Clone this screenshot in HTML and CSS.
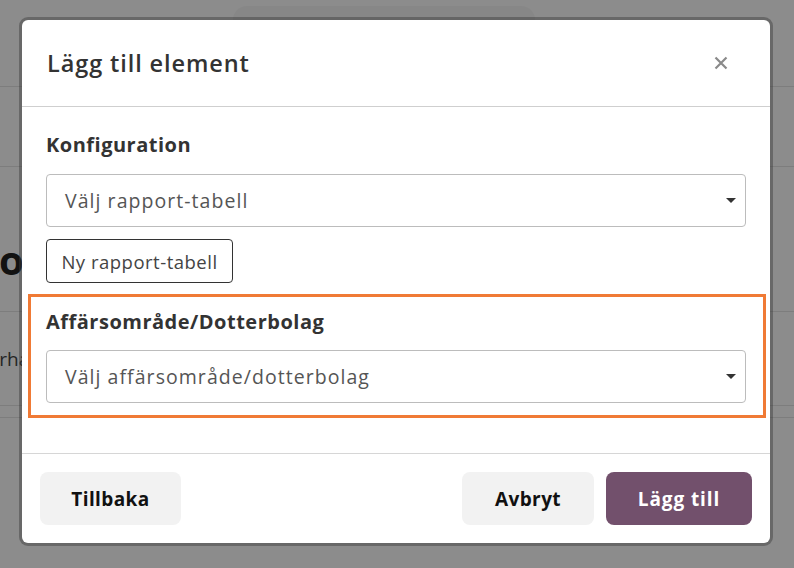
FILE: index.html
```html
<!DOCTYPE html>
<html lang="sv">
<head>
<meta charset="utf-8">
<title>Lägg till element</title>
<link rel="stylesheet" href="styles.css">
</head>
<body>
<div class="page">
  <div class="topbar"><div class="search"></div></div>
  <div class="bg-row bg-row-a"></div>
  <div class="bg-row bg-heading"><span class="bg-heading-text">o</span></div>
  <div class="bg-row bg-row-b"><span class="bg-cell-text">Förhand</span></div>
  <div class="bg-row bg-row-c"></div>
</div>
<div class="overlay"></div>
<div class="modal" role="dialog" aria-labelledby="modal-title">
  <div class="modal-header">
    <h2 class="modal-title" id="modal-title">Lägg till element</h2>
    <button class="close" aria-label="Stäng">
      <svg width="14" height="14" viewBox="0 0 14 14"><path d="M1.5 1.5 L12.5 12.5 M12.5 1.5 L1.5 12.5" stroke="#8a8a8a" stroke-width="2.2" stroke-linecap="butt"/></svg>
    </button>
  </div>
  <div class="modal-body">
    <div class="field">
      <div class="label">Konfiguration</div>
      <div class="select"><span>Välj rapport-tabell</span><span class="caret"></span></div>
      <button class="btn-outline">Ny rapport-tabell</button>
    </div>
    <div class="field highlight">
      <div class="label">Affärsområde/Dotterbolag</div>
      <div class="select"><span>Välj affärsområde/dotterbolag</span><span class="caret"></span></div>
    </div>
  </div>
  <div class="modal-footer">
    <button class="btn btn-light btn-back">Tillbaka</button>
    <div class="footer-right">
      <button class="btn btn-light btn-cancel">Avbryt</button>
      <button class="btn btn-primary btn-add">Lägg till</button>
    </div>
  </div>
</div>
</body>
</html>
```
FILE: styles.css
```css
* { box-sizing: border-box; }
html, body { margin: 0; padding: 0; }
body {
  width: 794px;
  height: 568px;
  overflow: hidden;
  font-family: "Open Sans", Lato, sans-serif;
  background: #fff;
  position: relative;
}
.page {
  width: 794px;
  height: 568px;
  background: #fff;
}
.topbar {
  height: 87px;
  border-bottom: 1px solid #e4e4e4;
  padding-top: 6px;
  padding-left: 233px;
}
.search {
  width: 302px;
  height: 40px;
  background: #f6f6f6;
  border-radius: 14px;
}
.bg-row { border-bottom: 1px solid #e4e4e4; }
.bg-row-a { height: 80px; }
.bg-heading {
  height: 145px;
  display: flex;
  align-items: center;
  padding-top: 40px;
}
.bg-heading-text {
  font-size: 40px;
  font-weight: 700;
  color: #222;
  margin-left: -1px;
  white-space: nowrap;
}
.bg-row-b {
  height: 94px;
  display: flex;
  align-items: center;
}
.bg-cell-text {
  font-size: 19px;
  color: #444;
  margin-left: -22px;
  white-space: nowrap;
}
.bg-row-c { height: 12px; }
.overlay {
  position: absolute;
  inset: 0;
  background: rgba(0, 0, 0, 0.45);
}
.modal {
  position: absolute;
  left: 22px;
  top: 20px;
  width: 748px;
  height: 523px;
  background: #fff;
  border-radius: 6px;
  box-shadow: 0 0 0 3px rgba(60, 60, 60, 0.45);
  display: flex;
  flex-direction: column;
}
.modal-header {
  height: 87px;
  border-bottom: 1px solid #cfcfcf;
  display: flex;
  align-items: center;
  justify-content: space-between;
  padding: 0 42px 0 25px;
}
.modal-title {
  margin: 0;
  font-size: 23.5px;
  font-weight: 600;
  color: #333;
  letter-spacing: 0.9px;
}
.close {
  border: 0;
  background: none;
  padding: 0;
  width: 14px;
  height: 14px;
  display: flex;
}
.modal-body {
  padding: 26px 24px 35px;
  border-bottom: 1px solid #d6d6d6;
}
.label {
  font-size: 20px;
  font-weight: 700;
  color: #333;
  line-height: 24px;
  letter-spacing: 0.5px;
  margin-bottom: 17px;
}
.select {
  height: 53px;
  border: 1px solid #bcbcbc;
  border-radius: 4px;
  display: flex;
  align-items: center;
  justify-content: space-between;
  padding: 0 9px 0 18px;
  font-size: 19.5px;
  letter-spacing: 1.05px;
  color: #555;
}
.caret {
  width: 0;
  height: 0;
  border-left: 5.5px solid transparent;
  border-right: 5.5px solid transparent;
  border-top: 5.5px solid #333;
}
.btn-outline {
  margin-top: 12px;
  height: 44px;
  width: 187px;
  padding: 0;
  background: #fff;
  border: 1px solid #333;
  border-radius: 4px;
  font-family: inherit;
  font-size: 18.5px;
  letter-spacing: 0.5px;
  color: #444;
  font-weight: 500;
}
.highlight {
  margin: 11px -20px 0 -18px;
  border: 3px solid #f07a35;
  padding: 13px 17px 12px 15px;
}
.highlight .label { margin-bottom: 16px; }
.modal-footer {
  flex: 1;
  display: flex;
  align-items: center;
  justify-content: space-between;
  padding: 0 18px;
}
.footer-right { display: flex; gap: 12px; }
.btn {
  height: 53px;
  border: 0;
  border-radius: 8px;
  font-family: inherit;
  font-size: 19px;
  font-weight: 700;
  letter-spacing: 0.4px;
  padding: 0;
}
.btn-back { width: 141px; }
.btn-cancel { width: 132px; }
.btn-add { width: 146px; letter-spacing: 0.9px; }
.btn-light { background: #f2f2f2; color: #111; }
.btn-primary { background: #72506c; color: #fff; }
```
